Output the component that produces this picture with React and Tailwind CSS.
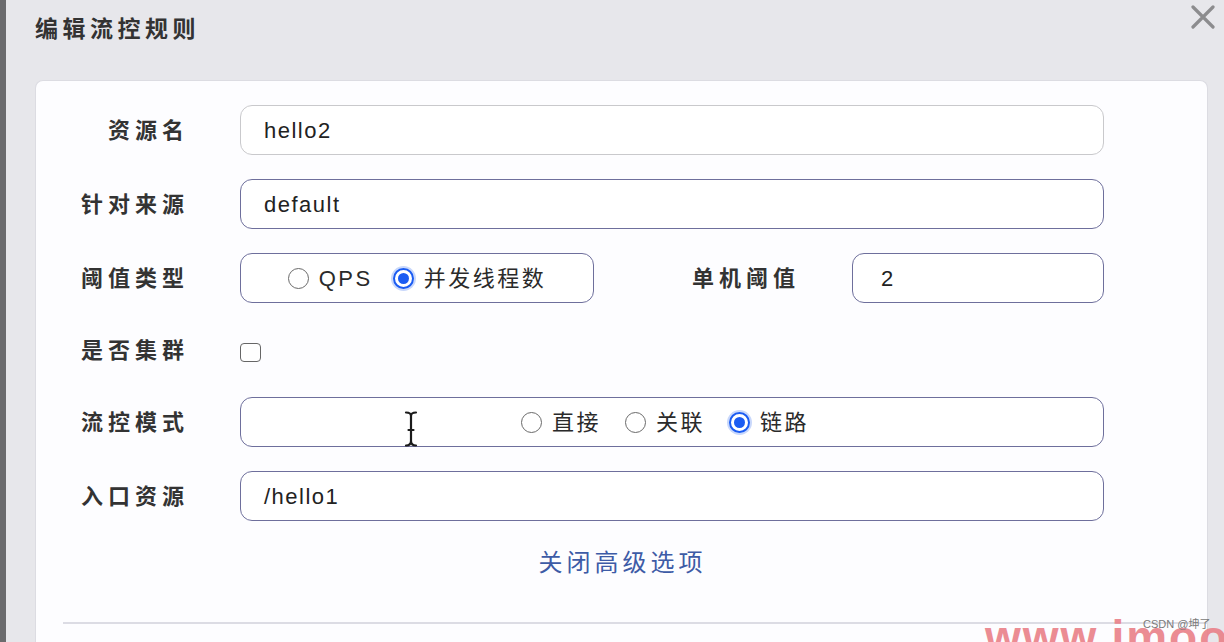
import { useState } from "react";

const Radio = ({ checked, label, onClick }) => (
  <button type="button" onClick={onClick} className="flex items-center gap-[10px]">
    {checked ? (
      <span className="w-[21px] h-[21px] rounded-full border-2 border-[#1b5cf2] bg-white flex items-center justify-center shadow-[0_0_0_2px_#c9d8fb]">
        <span className="w-[11px] h-[11px] rounded-full bg-[#1b5cf2]" />
      </span>
    ) : (
      <span className="w-[21px] h-[21px] rounded-full border-[1.5px] border-[#6a6a6a] bg-white" />
    )}
    <span className="text-[22px] tracking-[2.5px] text-[#2a2a2a]">{label}</span>
  </button>
);

const Label = ({ children }) => (
  <div className="w-[153px] shrink-0 text-right text-[22px] font-bold tracking-[5px] text-[#333]">
    {children}
  </div>
);

const boxCls =
  "h-[50px] rounded-[12px] border-[1.5px] border-[#6e6f9c] bg-white flex items-center";

const App = () => {
  const [grade, setGrade] = useState("thread");
  const [strategy, setStrategy] = useState("chain");
  const [cluster, setCluster] = useState(false);

  return (
    <div className="relative w-[1224px] h-[642px] overflow-hidden flex font-['Liberation_Sans','Noto_Sans_CJK_SC',sans-serif] bg-[#e7e7eb]">
      <div className="w-[6px] shrink-0 bg-[#6b6b6d]" />

      <div className="flex-1 flex flex-col">
        {/* Header */}
        <div className="h-[80px] shrink-0 flex items-start justify-between pl-[29px] pr-[8px]">
          <h1 className="mt-[12px] text-[23px] font-bold tracking-[4.5px] text-[#333]">编辑流控规则</h1>
          <svg width="26" height="24" viewBox="0 0 26 24" className="mt-[5px]">
            <path d="M3 2 L23 22 M23 2 L3 22" stroke="#8c8c8e" strokeWidth="3.2" strokeLinecap="round" />
          </svg>
        </div>

        {/* Card */}
        <div className="flex-1 ml-[29px] mr-[16px] rounded-t-[8px] bg-[#fdfdff] border border-[#dcdce2] border-b-0 pt-[24px] flex flex-col">
          <div className="flex flex-col gap-[24px] pr-[103px]">
            <div className="flex items-center gap-[51px]">
              <Label>资源名</Label>
              <div className={`${boxCls} flex-1 bg-[#e4e4e6] border-[#c9c9cc] pl-[23px] text-[22px] tracking-[1.5px] text-[#222]`}>
                hello2
              </div>
            </div>

            <div className="flex items-center gap-[51px]">
              <Label>针对来源</Label>
              <div className={`${boxCls} flex-1 pl-[23px] text-[22px] tracking-[1.5px] text-[#222]`}>default</div>
            </div>

            <div className="flex items-center gap-[51px]">
              <Label>阈值类型</Label>
              <div className="flex-1 flex items-center">
                <div className={`${boxCls} w-[354px] justify-center gap-[20px]`}>
                  <Radio label="QPS" checked={grade === "qps"} onClick={() => setGrade("qps")} />
                  <Radio label="并发线程数" checked={grade === "thread"} onClick={() => setGrade("thread")} />
                </div>
                <div className="flex-1 text-right pr-[52px] text-[22px] font-bold tracking-[5px] text-[#333]">
                  单机阈值
                </div>
                <div className={`${boxCls} w-[252px] pl-[28px] text-[22px] text-[#222]`}>2</div>
              </div>
            </div>

            <div className="flex items-center gap-[51px] h-[46px]">
              <Label>是否集群</Label>
              <button
                type="button"
                onClick={() => setCluster(!cluster)}
                className="w-[21px] h-[19px] rounded-[4px] border-[1.5px] border-[#666] bg-white mt-[5px]"
              />
            </div>

            <div className="flex items-center gap-[51px]">
              <Label>流控模式</Label>
              <div className={`${boxCls} relative flex-1 justify-center gap-[24px] pr-[14px]`}>
                <Radio label="直接" checked={strategy === "direct"} onClick={() => setStrategy("direct")} />
                <Radio label="关联" checked={strategy === "relate"} onClick={() => setStrategy("relate")} />
                <Radio label="链路" checked={strategy === "chain"} onClick={() => setStrategy("chain")} />
                {/* text cursor */}
                <svg width="14" height="36" viewBox="0 0 14 36" className="absolute left-[163px] top-[13px]">
                  <path
                    d="M2 1.5 Q7 1.5 7 5 Q7 1.5 12 1.5 M7 5 L7 30 M2 34.5 Q7 34.5 7 30 Q7 34.5 12 34.5 M4.5 19 L9.5 19"
                    stroke="#1b1b1b"
                    strokeWidth="2.2"
                    fill="none"
                    strokeLinecap="round"
                  />
                </svg>
              </div>
            </div>

            <div className="flex items-center gap-[51px]">
              <Label>入口资源</Label>
              <div className={`${boxCls} flex-1 pl-[23px] text-[22px] tracking-[1.5px] text-[#222]`}>/hello1</div>
            </div>
          </div>

          <div className="mt-[24px] flex justify-center pl-[2px]">
            <button type="button" className="text-[24px] tracking-[4px] text-[#3d5ba6]">关闭高级选项</button>
          </div>

          <div className="mt-[41px] ml-[27px] h-[2px] bg-[#dcdce4]" />
        </div>
      </div>

      {/* watermarks */}
      <div className="absolute left-[985px] top-[614px] text-[46px] font-bold tracking-[2px] text-[#ea8088] opacity-90 leading-none">
        www.imooc
      </div>
      <div className="absolute left-[1143px] top-[619px] text-[11px] text-[#7a7a7a] leading-none">CSDN @坤了</div>
    </div>
  );
};

export default App;
